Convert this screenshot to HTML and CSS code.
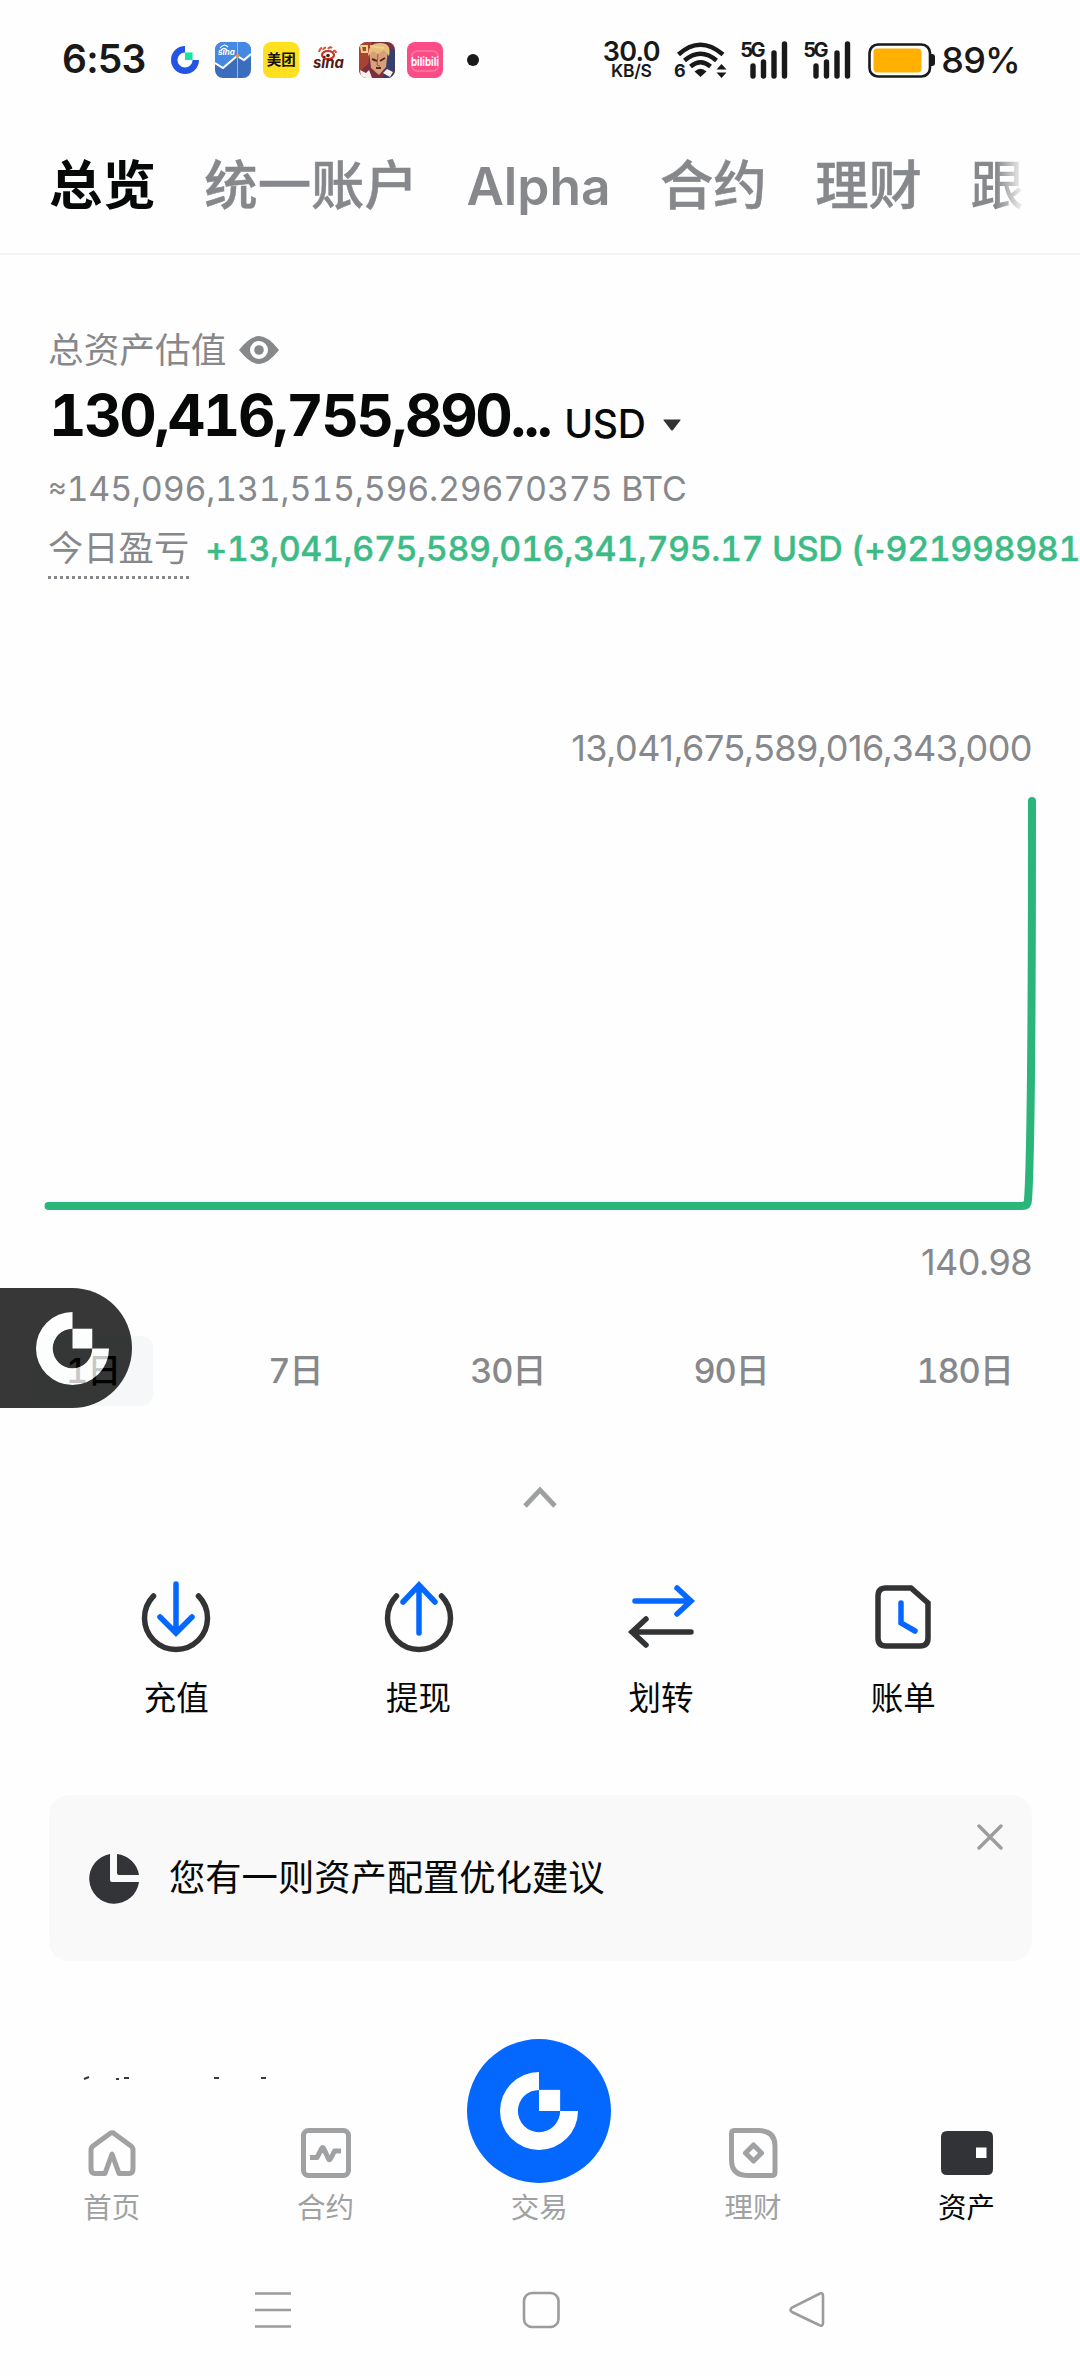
FILE: index.html
```html
<!DOCTYPE html>
<html lang="zh-CN">
<head>
<meta charset="utf-8">
<title>资产总览</title>
<link rel="stylesheet" href="styles.css">
</head>
<body>
<svg class="defs" width="0" height="0">
  <symbol id="logo" viewBox="0 0 72 72">
    <path d="M36 0A36 36 0 1 0 72 36H55.500A19.500 19.500 0 1 1 36 16.500Z"/>
    <path class="logo-square" d="M36 16.500H55.500V36H36Z"/>
  </symbol>
  <symbol id="signal" viewBox="0 0 48 38">
    <path d="M13 25v10M23.500 21v14M34 12v23M44.500 3v32" fill="none" stroke="#19191a" stroke-width="5.400" stroke-linecap="round"/>
  </symbol>
</svg>
<div class="screen">
  <header class="status">
    <span class="clock">6:53</span>
    <div class="notifs">
      <svg class="n-gate" viewBox="0 0 72 72"><use href="#logo"/></svg>
      <svg class="n-app" viewBox="0 0 36 36">
        <rect width="36" height="36" rx="8" fill="#3a6dbb"/>
        <path d="M0 8a8 8 0 0 1 8-8H28a8 8 0 0 1 8 8V15L29 20 22 14 8 27 0 22Z" fill="#4489e4"/>
        <path d="M0 21l8 5L22 14l7 4 7-6" fill="none" stroke="#fff" stroke-width="2"/>
        <path d="M22.500 0v36" stroke="#b9c9dc" stroke-width=".8"/>
        <circle cx="22.500" cy="14" r="2" fill="#d89a4e"/>
        <path d="M5 6q4-5 8-1M6 8q3-3 6 0" fill="none" stroke="#fff" stroke-width="1.200"/>
        <text x="3" y="13" class="t-sina-s">sina</text>
      </svg>
      <span class="n-meituan">美团</span>
      <svg class="n-sina" viewBox="0 0 36 36">
        <ellipse cx="17" cy="13" rx="6" ry="4" fill="none" stroke="#c8321f" stroke-width="2.200"/>
        <circle cx="17" cy="13.500" r="1.800" fill="#531a16"/>
        <path d="M8 10q1-4 3-4M12 8q1-3 3-2M17 7q2-3 4-1M22 9q3-1 3 2" fill="none" stroke="#d6513c" stroke-width="2"/>
        <text x="2" y="26" class="t-sina" textLength="31" lengthAdjust="spacingAndGlyphs">sina</text>
      </svg>
      <svg class="n-app" viewBox="0 0 36 36">
        <clipPath id="game"><rect width="36" height="36" rx="8"/></clipPath>
        <g clip-path="url(#game)">
          <rect width="36" height="36" fill="#7a3040"/>
          <path d="M0 0H13L9 22 0 30Z" fill="#a8432f"/>
          <path d="M28 6l8 2V36H24Z" fill="#37406d"/>
          <path d="M10 8Q18-2 29 8L27 25 20 33 12 26Z" fill="#d7a078"/>
          <path d="M9 14Q9 1 21 1T30 14L25 8 19 12 14 9Z" fill="#e5bf7c"/>
          <path d="M13 17l5 2M21 19l5-3M17 26h5" stroke="#57281f" stroke-width="2"/>
          <path d="M19 12l-1 11 3 1" fill="none" stroke="#a65a40"/>
          <path d="M1 28l6 3 3-3 3 8H2ZM24 31l4-4 6 3-3 5Z" fill="#fff0e6"/>
          <path d="M2 4h6v6H3ZM11 4l14 2" fill="none" stroke="#f4cf8b" stroke-width="2"/>
        </g>
      </svg>
      <svg class="n-app" viewBox="0 0 36 36">
        <rect width="36" height="36" rx="8" fill="#fb4c86"/>
        <rect x="5" y="9" width="26" height="20" rx="5" fill="none" stroke="#fd7aa5" stroke-width="1.500"/>
        <text x="4" y="24" class="t-bili" textLength="28" lengthAdjust="spacingAndGlyphs">bilibili</text>
      </svg>
      <i class="more-dot"></i>
    </div>
    <div class="sys">
      <div class="speed"><b>30.0</b><span>KB/S</span></div>
      <svg class="wifi" viewBox="0 0 54 38">
        <g fill="none" stroke="#19191a" stroke-width="4.500">
          <path d="M5.500 13.500Q27-6 50 13.500"/><path d="M11.500 19.500Q27.500 6 43.500 19.500"/><path d="M17.500 25.500Q27.500 17 37.500 25.500"/>
        </g>
        <path d="M21.500 30.500Q27.500 25 33.500 30.500L27.500 36Z" fill="#19191a"/>
        <path d="M43.500 28.500L48.500 23l5 5.500ZM43.500 31.500h10L48.500 37Z" fill="#19191a"/>
        <text x="1" y="36" class="t-six">6</text>
      </svg>
      <div class="cell"><svg viewBox="0 0 48 38"><use href="#signal"/></svg><span>5G</span></div>
      <div class="cell"><svg viewBox="0 0 48 38"><use href="#signal"/></svg><span>5G</span></div>
      <svg class="battery" viewBox="0 0 68 36">
        <rect x="1.500" y="2.500" width="60.500" height="32" rx="8.500" fill="#fff" stroke="#19191a" stroke-width="2.600"/>
        <rect x="5.500" y="6.500" width="48" height="24" rx="4" fill="#ffb000"/>
        <path d="M62 12h2a3 3 0 0 1 3 3v6a3 3 0 0 1-3 3h-2Z" fill="#19191a"/>
      </svg>
      <span class="percent">89%</span>
    </div>
  </header>

  <nav class="tabs">
    <span class="on">总览</span><span>统一账户</span><span class="alpha">Alpha</span><span>合约</span><span>理财</span><span>跟</span>
  </nav>

  <main>
    <section class="summary">
      <div class="row label">总资产估值
        <svg width="42" height="30" viewBox="0 0 42 30"><path fill="#86888b" fill-rule="evenodd" d="M1 15Q12 1 21 1T41 15Q30 29 21 29T1 15ZM12 15a9 9 0 1 0 18 0 9 9 0 1 0-18 0Z"/><circle cx="21" cy="15" r="4.800" fill="#86888b"/></svg>
      </div>
      <div class="row total"><strong>130,416,755,890...</strong><span class="unit">USD</span><svg width="18" height="12" viewBox="0 0 18 12"><path d="M1 .5H17Q18 .5 17.300 1.500L10 11Q9 12 8 11L.7 1.500Q0 .5 1 .5Z" fill="#323335"/></svg></div>
      <div class="btc"><i>≈</i>145,096,131,515,596.29670375 BTC</div>
      <div class="row pnl"><span class="dotted">今日盈亏</span><span class="gain">+13,041,675,589,016,341,795.17 USD (+921998981</span></div>
    </section>

    <section class="chart">
      <div class="axis">13,041,675,589,016,343,000</div>
      <svg width="1080" height="430" viewBox="0 0 1080 430"><path d="M48.500 416H1022Q1028 416 1028 410C1031 370 1032 220 1032 11" fill="none" stroke="#2bb57b" stroke-width="8" stroke-linecap="round"/></svg>
      <div class="axis">140.98</div>
    </section>

    <section class="ranges">
      <span class="chip on">1日</span><span class="chip">7日</span><span class="chip">30日</span><span class="chip">90日</span><span class="chip">180日</span>
      <div class="float"><svg viewBox="0 0 72 72"><use href="#logo"/></svg></div>
    </section>

    <div class="collapse"><svg width="34" height="24" viewBox="0 0 34 24"><path d="M2 21L17 5 32 21" fill="none" stroke="#9d9fa1" stroke-width="4.800"/></svg></div>

    <section class="actions">
      <div class="action">
        <svg viewBox="0 0 76 76"><path d="M15.500 18A31.500 31.500 0 1 0 60.500 18" class="ink"/><path d="M38 6V54M22 39L38 55 54 39" class="blue"/></svg>充值
      </div>
      <div class="action">
        <svg viewBox="0 0 76 76"><path d="M15.500 18A31.500 31.500 0 1 0 60.500 18" class="ink"/><path d="M38 55V8M22 24L38 7 54 24" class="blue"/></svg>提现
      </div>
      <div class="action">
        <svg viewBox="0 0 76 76"><path d="M12 23H68M54 10L68 23 54 36" class="blue"/><path d="M68 54H9M23 41L9 54 23 67" class="ink"/></svg>划转
      </div>
      <div class="action">
        <svg viewBox="0 0 76 76"><path d="M20 10H46L63 25V60Q63 68 55 68H21Q13 68 13 60V18Q13 10 21 10" class="ink"/><path d="M36 25V45L50 53" class="blue"/></svg>账单
      </div>
    </section>

    <section class="advice">
      <svg width="52" height="52" viewBox="0 0 52 52"><path d="M22 1A25 25 0 1 0 51 29H24Q22 29 22 27ZM29 1A25 25 0 0 1 51 22H31Q29 22 29 20Z" fill="#323437"/></svg>
      <span>您有一则资产配置优化建议</span>
      <svg class="close" width="26" height="26" viewBox="0 0 26 26"><path d="M2 2L24 24M24 2L2 24" stroke="#9c9d9f" stroke-width="3.400" stroke-linecap="round"/></svg>
    </section>

    <div class="peek"><svg width="190" height="4" viewBox="0 0 190 4"><path d="M2 3l5-2M34 3h3M42 2h5M132 2h5M179 2h5" stroke="#37383a" stroke-width="2"/></svg></div>
  </main>

  <nav class="tabbar">
    <div class="tab"><svg viewBox="0 0 56 56"><path d="M28 7L47 21Q49 22.500 49 25V44Q49 48.500 45 48.500H35L28 29 21 48.500H11Q7 48.500 7 44V25Q7 22.500 9 21L26 8.500Q28 7 30 8.500" class="gray"/></svg>首页</div>
    <div class="tab"><svg viewBox="0 0 56 56"><rect x="5.500" y="5.500" width="45" height="45" rx="5" class="gray"/><path d="M12 32.500H19L24 23Q25 22 26 24L30.500 34Q31.500 36 33 33L36.500 26H43" class="gray"/></svg>合约</div>
    <div class="tab trade"><div class="orb"><svg viewBox="0 0 72 72"><use href="#logo"/></svg></div>交易</div>
    <div class="tab"><svg viewBox="0 0 56 56"><path d="M9 5.500H34Q50 6 50 21V47Q50 50.500 47 50.500H22Q6.500 50 6.500 35V9Q6.500 5.500 9 5.500Z" class="gray"/><path d="M28.500 20L36.500 28 28.500 36 20.500 28Z" class="gray"/></svg>理财</div>
    <div class="tab on"><svg viewBox="0 0 56 56"><path fill="#323337" fill-rule="evenodd" d="M8 6H48Q54 6 54 12V44Q54 50 48 50H8Q2 50 2 44V12Q2 6 8 6ZM37 22.500V33H47.500V22.500Z"/></svg>资产</div>
  </nav>

  <footer class="softkeys">
    <svg width="40" height="40" viewBox="0 0 40 40"><path d="M2 3.500H38M2 20H38M2 36.500H38"/></svg>
    <svg width="40" height="40" viewBox="0 0 40 40"><rect x="3" y="3" width="34.500" height="34" rx="8"/></svg>
    <svg width="40" height="40" viewBox="0 0 40 40"><path d="M31 4Q35 2 35 6V33Q35 37 31 35L4 22Q1 20 4 17.500Z"/></svg>
  </footer>
</div>
</body>
</html>
```
FILE: styles.css
```css
* { box-sizing: border-box; }
body { margin: 0; background: #fefefe; font-family: Inter, "Noto Sans CJK SC", sans-serif; color: #070808; }
svg { display: block; flex: none; }
.defs { position: absolute; }
.screen { width: 1080px; height: 2376px; overflow: hidden; display: flex; flex-direction: column; white-space: nowrap; }
.row { display: flex; align-items: center; }

/* status bar */
.status { height: 120px; display: flex; align-items: center; padding: 0 60px 0 62px; color: #19191a; }
.clock { width: 111px; font-size: 39px; font-weight: 600; letter-spacing: -.8px; line-height: 120px; padding-bottom: 2px; }
.notifs { display: flex; align-items: center; gap: 12px; }
.n-gate { width: 28px; height: 28px; margin-right: 4px; fill: #2354e6; }
.logo-square { fill: var(--square, currentColor); }
.n-gate { --square: #17e5a1; }
.n-app, .n-sina { width: 36px; height: 36px; }
.n-meituan { width: 36px; height: 36px; border-radius: 8px; background: #ffe01f; color: #111; font-size: 14.500px; font-weight: 700; line-height: 36px; text-align: center; }
.t-sina-s { font: italic 700 8px Inter, sans-serif; fill: #fff; }
.t-sina { font: italic 700 15px Inter, sans-serif; fill: #531a16; }
.t-bili { font: 700 12px Inter, sans-serif; fill: #fff; }
.t-six { font: 700 18px Inter, sans-serif; fill: #19191a; }
.more-dot { width: 12px; height: 12px; margin-left: 12px; border-radius: 50%; background: #19191a; }
.sys { display: flex; align-items: center; margin-left: 123px; }
.speed { width: 58px; display: flex; flex-direction: column; align-items: center; line-height: 1; margin-right: 13px; }
.speed b { font-size: 27px; font-weight: 600; line-height: 22px; letter-spacing: -.7px; }
.speed span { font-size: 17.500px; font-weight: 600; line-height: 16px; letter-spacing: -.3px; }
.wifi { width: 54px; height: 38px; overflow: visible; }
.cell { position: relative; width: 48px; height: 38px; margin-left: 13px; margin-right: 2px; }
.cell svg { width: 48px; height: 38px; }
.cell span { position: absolute; left: 0; top: 0; font-size: 20px; font-weight: 700; line-height: 18px; letter-spacing: -2.500px; }
.battery { width: 68px; height: 36px; margin-left: 15px; }
.percent { margin-left: 5px; font-size: 36px; font-weight: 500; letter-spacing: -.8px; }

/* top tabs */
.tabs { height: 135px; flex: none; display: flex; gap: 48.500px; padding: 29px 0 0 49px; border-bottom: 2px solid #f3f3f4; font-size: 53.400px; font-weight: 500; line-height: 74px; color: #86888b; overflow: hidden; -webkit-text-stroke: .5px; }
.tabs .on { color: #070808; font-weight: 700; -webkit-text-stroke: 0; }
.tabs .alpha { font-size: 51.500px; font-weight: 600; width: 145px; -webkit-text-stroke: 0; }
.tabs span:last-child { width: 58px; background: linear-gradient(90deg, #86888b 45%, #fefefe 96%); background-clip: text; color: transparent; -webkit-text-stroke: 0; }

main { display: flex; flex-direction: column; height: 1826px; flex: none; }

/* balance summary */
.summary { padding: 69px 0 0 48px; height: 380px; font-feature-settings: "tnum"; }
.label { height: 52px; gap: 12px; font-size: 35.700px; color: #86888b; line-height: 52px; }
.total { height: 78px; }
.total strong { padding-left: 1px; font-size: 58px; font-weight: 700; letter-spacing: -2.350px; line-height: 78px; }
.unit { margin: 17px 17px 0 14px; font-size: 39px; font-weight: 500; letter-spacing: -.2px; }
.total svg { margin-top: 19px; }
.btc { height: 60px; margin-top: 5px; line-height: 60px; font-size: 34px; letter-spacing: -.25px; color: #86888b; display: flex; }
.btc i { font-style: normal; font-size: 29px; line-height: 56px; }
.pnl { height: 64px; gap: 16px; margin-top: -3px; }
.dotted { font-size: 35.300px; line-height: 65px; height: 64px; color: #86888b; background: repeating-linear-gradient(90deg, #86888b 0 3px, transparent 3px 6px) 0 60px / 100% 3px no-repeat; }
.gain { font-size: 34px; font-weight: 500; letter-spacing: -.42px; color: #3cbb87; -webkit-text-stroke: .4px; }

/* profit chart */
.chart { height: 680px; padding-top: 91px; }
.axis { height: 44px; line-height: 44px; padding-right: 48px; text-align: right; font-size: 36px; letter-spacing: -.560px; color: #86888b; }
.chart svg { margin-top: 20px; margin-bottom: 20px; }

/* range selector */
.ranges { position: relative; display: flex; gap: 82px; padding: 22px 0 0 33px; height: 130px; margin-top: -1px; font-feature-settings: "tnum"; }
.chip { height: 70px; padding: 0 33px; border-radius: 12px; line-height: 70px; font-size: 34.300px; font-weight: 500; letter-spacing: -1.200px; color: #86888b; }
.chip.on { background: #f5f7f8; color: #000; }
.float { position: absolute; left: 0; top: -26px; width: 132px; height: 120px; border-radius: 0 60px 60px 0; background: #000; opacity: .78; display: flex; align-items: center; padding-left: 36px; }
.float svg { width: 73px; height: 73px; fill: #fff; color: #fff; }

.collapse { height: 70px; display: flex; justify-content: center; padding-top: 41px; }

/* quick actions */
.actions { display: grid; grid-template-columns: repeat(4, 242.400px); padding: 50px 0 0 55px; height: 208px; margin-top: 14px; }
.action { display: flex; flex-direction: column; align-items: center; gap: 22px; font-size: 32.500px; line-height: 46px; }
.action svg { width: 76px; height: 76px; }
.ink, .blue { fill: none; stroke: #323335; stroke-width: 5.500; stroke-linecap: round; }
.blue { stroke: #0468ff; }

/* advice card */
.advice { position: relative; margin: 59px 48px 0 49px; height: 166px; border-radius: 20px; background: #f9f9f9; display: flex; align-items: center; gap: 29px; padding: 1px 39px 0; font-size: 36.300px; }
.advice span { margin-top: -7px; }
.close { position: absolute; right: 29px; top: 29px; }
.peek { margin-top: auto; padding-left: 82px; height: 5px; }

/* bottom tabs */
.tabbar { height: 170px; flex: none; display: grid; grid-template-columns: repeat(5, 213.700px); padding: 44px 0 0 5px; font-size: 28.500px; line-height: 40px; color: #a0a1a3; }
.tab { display: flex; flex-direction: column; align-items: center; gap: 7px; }
.tab svg { width: 56px; height: 56px; }
.tab.on { color: #070808; }
.gray { fill: none; stroke: #a0a1a3; stroke-width: 5; stroke-linejoin: round; }
.orb { width: 144px; height: 144px; margin-top: -86px; margin-bottom: -2px; border-radius: 50%; background: #0468ff; display: flex; align-items: center; justify-content: center; }
.tab .orb svg { width: 78px; height: 78px; fill: #fff; color: #fff; }

/* system keys */
.softkeys { flex: 1; display: flex; justify-content: space-between; padding: 39px 252px 0 253px; }
.softkeys svg { fill: none; stroke: #9b9c9d; stroke-width: 2.600; }
```
